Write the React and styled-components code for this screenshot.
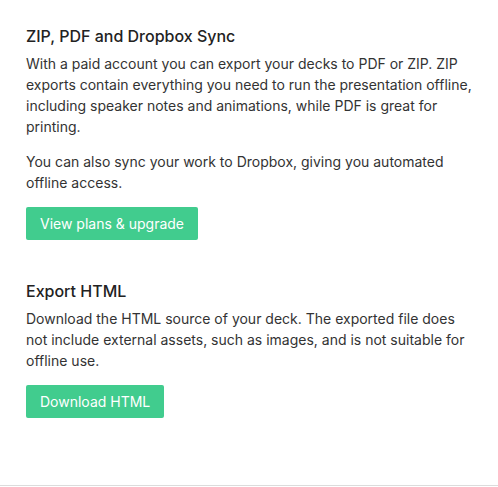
import styled, { createGlobalStyle } from "styled-components";

const GlobalStyle = createGlobalStyle`
  html, body {
    margin: 0;
    padding: 0;
    background: #ffffff;
  }
  body {
    font-family: Inter, "Noto Sans", sans-serif;
    -webkit-font-smoothing: antialiased;
  }
`;

const Panel = styled.div`
  width: 498px;
  height: 486px;
  box-sizing: border-box;
  border-bottom: 1px solid #dcdcdc;
  padding: 25px 26px 0;
  display: flex;
  flex-direction: column;
  gap: 40px;
`;

const Section = styled.section`
  display: flex;
  flex-direction: column;
  align-items: flex-start;
`;

const Title = styled.h3`
  margin: 0 0 6px;
  font-size: 16px;
  line-height: 22px;
  font-weight: 500;
  color: #222222;
`;

const Text = styled.p`
  margin: 0 0 14px;
  font-size: 14px;
  line-height: 21px;
  color: #333333;
`;

const Button = styled.button`
  height: 33px;
  padding: 0 14px;
  border: none;
  border-radius: 2px;
  background: #41cc8e;
  color: #ffffff;
  font-family: inherit;
  font-size: 14px;
  cursor: pointer;
`;

export default function App() {
  return (
    <>
      <GlobalStyle />
      <Panel>
        <Section>
          <Title>ZIP, PDF and Dropbox Sync</Title>
          <Text>
            With a paid account you can export your decks to PDF or ZIP. ZIP
            exports contain everything you need to run the presentation offline,
            including speaker notes and animations, while PDF is great for
            printing.
          </Text>
          <Text>
            You can also sync your work to Dropbox, giving you automated offline
            access.
          </Text>
          <Button>View plans &amp; upgrade</Button>
        </Section>
        <Section>
          <Title>Export HTML</Title>
          <Text>
            Download the HTML source of your deck. The exported file does not
            include external assets, such as images, and is not suitable for
            offline use.
          </Text>
          <Button>Download HTML</Button>
        </Section>
      </Panel>
    </>
  );
}
